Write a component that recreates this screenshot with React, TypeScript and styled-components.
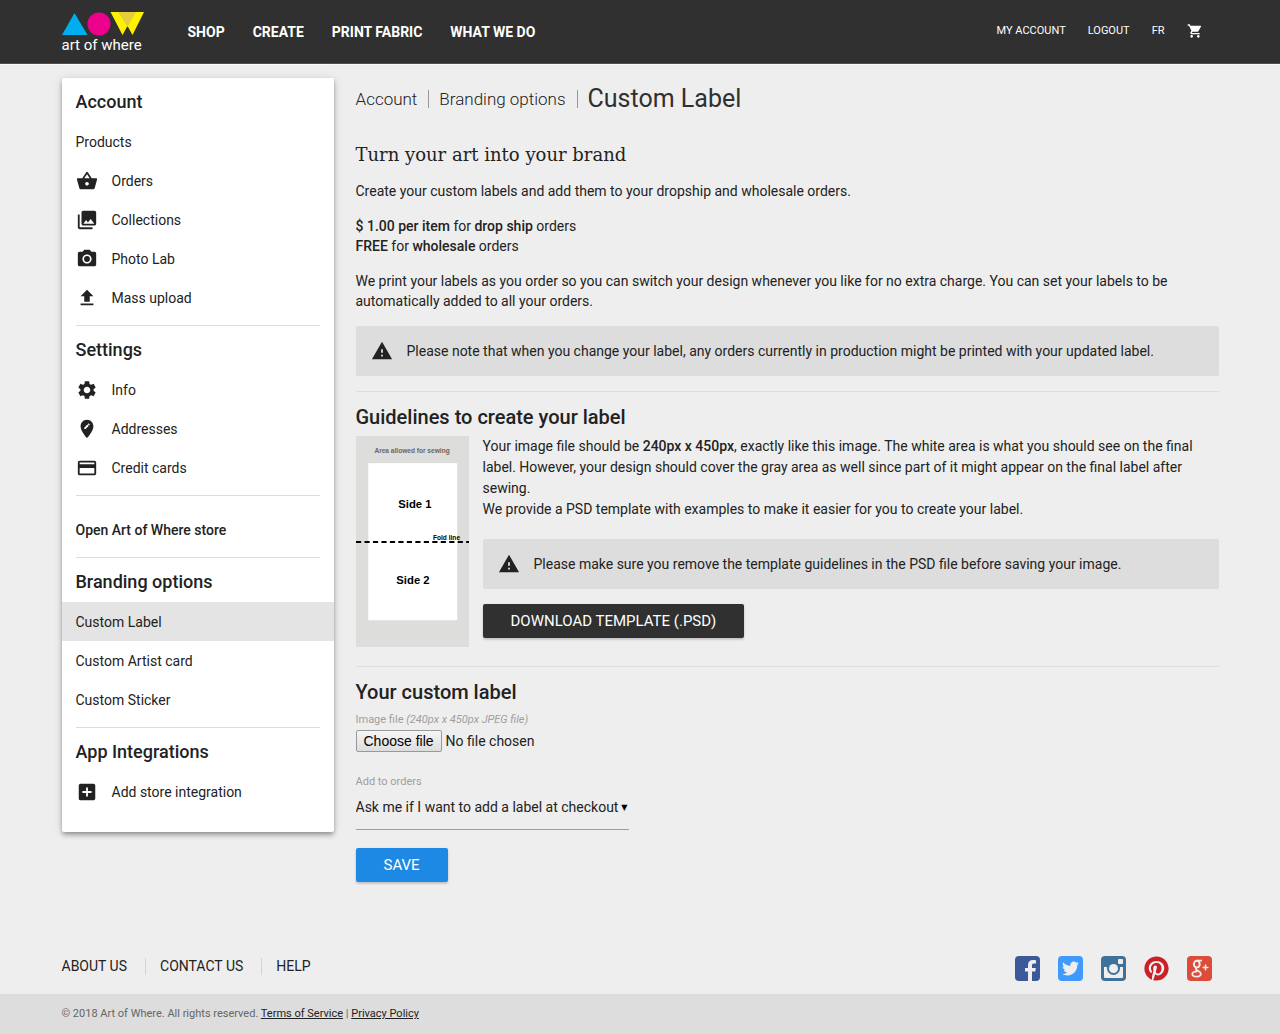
import React, { useState } from "react";
import styled, { createGlobalStyle } from "styled-components";
import {
  MdAddBox,
  MdCreditCard,
  MdEditLocation,
  MdPhotoCamera,
  MdPhotoLibrary,
  MdSettings,
  MdShoppingBasket,
  MdShoppingCart,
  MdWarning,
} from "react-icons/md";
import { FaTwitter, FaPinterest } from "react-icons/fa";

const GlobalStyle = createGlobalStyle`
  *, *::before, *::after { box-sizing: border-box; }
  body {
    margin: 0;
    background: #eeeeee;
    color: #222222;
    font: 400 14px/20px Roboto, "Liberation Sans", sans-serif;
  }
  h1, h2, h3, p, ul { margin: 0; padding: 0; font-weight: 400; }
  ul { list-style: none; }
  a { color: inherit; text-decoration: none; }
  strong { font-weight: 500; }
`;

const Container = styled.div`
  width: calc(100% - 40px);
  max-width: 1157px;
  margin: 0 auto;
`;

/* Header */
const Header = styled.header`
  background: #303030;
  border-bottom: 1px solid #505050;
  box-shadow: 0 1px 0 #fafafa;
  color: #ffffff;
`;

const HeaderInner = styled(Container)`
  display: flex;
  align-items: center;
  min-height: 63px;
`;

const Logo = styled.a`
  display: flex;
  flex-direction: column;
  width: 82px;
  padding-top: 2px;
  margin-right: 44px;
  font-size: 15px;
  line-height: 18px;
  white-space: nowrap;
  svg { display: block; }
`;

const MainNav = styled.nav`
  display: flex;
  gap: 28px;
  flex: 1;
  font-weight: 700;
`;

const UserNav = styled.nav`
  display: flex;
  align-items: center;
  gap: 22px;
  padding: 0 16px 2px 0;
  font-size: 11px;
  a { display: flex; }
`;

/* Page columns */
const Columns = styled(Container)`
  display: flex;
  align-items: flex-start;
  gap: 22px;
  padding-top: 14px;
`;

const Sidebar = styled.aside`
  flex: 0 0 272px;
  padding-bottom: 21px;
  background: #ffffff;
  border-radius: 2px;
  box-shadow: 0 4px 5px 0 rgba(0, 0, 0, 0.14), 0 1px 10px 0 rgba(0, 0, 0, 0.12),
    0 2px 4px -1px rgba(0, 0, 0, 0.3);
`;

const MenuGroup = styled.section<{ $spaced?: boolean }>`
  padding-top: ${(p) => (p.$spaced ? 14 : 0)}px;
  &:not(:last-child)::after {
    content: "";
    display: block;
    height: 1px;
    margin: 8px 14px 0;
    background: #dddddd;
  }
`;

const MenuTitle = styled.h2`
  padding: 4px 14px 0;
  font-size: 18px;
  font-weight: 500;
  line-height: 40px;
`;

const MenuLink = styled.a<{ $active?: boolean; $strong?: boolean }>`
  display: flex;
  align-items: center;
  gap: 14px;
  height: 39px;
  padding: 0 14px;
  font-weight: ${(p) => (p.$strong ? 500 : 400)};
  background: ${(p) => (p.$active ? "#e4e4e4" : "transparent")};
  svg { width: 22px; height: 22px; }
`;

const Main = styled.main`
  flex: 1;
  min-width: 0;
`;

const Breadcrumbs = styled.div`
  display: flex;
  align-items: center;
  height: 42px;
  font-size: 17px;
  font-weight: 300;
  a { padding-right: 11px; margin-right: 10px; border-right: 1px solid #999999; line-height: 18px; }
`;

const PageTitle = styled.h1`
  font-size: 25px;
  color: #303030;
`;

const Tagline = styled.h2`
  margin: 22px 0 13px;
  font-family: "DejaVu Serif", serif;
  font-size: 18px;
  line-height: 26px;
`;

const Paragraph = styled.p`
  margin-bottom: 15px;
`;

const Notice = styled.div`
  display: flex;
  align-items: center;
  gap: 14px;
  padding: 14px 15px;
  margin-bottom: 15px;
  border-radius: 2px;
  background: #dddddd;
  svg { flex: none; width: 22px; height: 22px; }
`;

const Divider = styled.hr`
  height: 1px;
  margin: 0;
  border: 0;
  background: #dddddd;
`;

const SectionTitle = styled.h2`
  padding: 12px 0 6px;
  font-size: 20px;
  font-weight: 500;
  line-height: 26px;
`;

const Guidelines = styled.div`
  display: flex;
  align-items: flex-start;
  gap: 14px;
  margin-bottom: 19px;
`;

const GuidelineBody = styled.div`
  flex: 1;
  min-width: 0;
`;

const GuidelineText = styled.p`
  margin-bottom: 19px;
  line-height: 21px;
`;

const Template = styled.svg`
  display: block;
  flex: none;
`;

const Button = styled.button<{ $tone: string }>`
  height: 34px;
  padding: 0 28px;
  border: 0;
  border-radius: 2px;
  background: ${(p) => p.$tone};
  color: #ffffff;
  font: inherit;
  font-size: 15px;
  text-transform: uppercase;
  box-shadow: 0 2px 2px 0 rgba(0, 0, 0, 0.1), 0 1px 3px 0 rgba(0, 0, 0, 0.12);
  cursor: pointer;
`;

const Form = styled.form`
  display: flex;
  flex-direction: column;
  align-items: flex-start;
`;

const FieldLabel = styled.label`
  color: #9e9e9e;
  font-size: 11px;
  line-height: 18px;
`;

const FilePicker = styled.div`
  position: relative;
  display: flex;
  align-items: center;
  gap: 4px;
  height: 24px;
  margin-bottom: 20px;
  input { position: absolute; inset: 0; width: 100%; opacity: 0; cursor: pointer; }
`;

const FileButton = styled.span`
  padding: 0 7px;
  border: 1px solid #999999;
  border-radius: 2px;
  background: linear-gradient(#f6f6f6, #dddddd);
  color: #000000;
  font: 14px/20px "Liberation Sans", Arial, sans-serif;
`;

const SelectBox = styled.div`
  position: relative;
  margin-bottom: 18px;
  border-bottom: 1px solid #9e9e9e;
  &::after {
    content: "▼";
    position: absolute;
    right: 1px;
    top: 7px;
    font: 8px/20px "DejaVu Sans", sans-serif;
    color: #000000;
    pointer-events: none;
  }
`;

const Select = styled.select`
  display: block;
  width: 273px;
  height: 38px;
  padding: 0 0 6px;
  border: 0;
  appearance: none;
  background: transparent;
  color: inherit;
  font: inherit;
`;

/* Footer */
const Footer = styled.footer`
  margin-top: 73px;
`;

const FooterTop = styled(Container)`
  display: flex;
  justify-content: space-between;
  align-items: flex-start;
  min-height: 39px;
`;

const FooterLinks = styled.nav`
  display: flex;
  padding-top: 3px;
  line-height: 17px;
  a + a { margin-left: 18px; padding-left: 14px; border-left: 1px solid #d4d4d4; }
`;

const SocialLinks = styled.nav`
  display: flex;
  gap: 18px;
  padding: 1px 7px 0 0;
`;

const SocialTile = styled.a<{ $color?: string }>`
  display: grid;
  place-items: center;
  width: 25px;
  height: 25px;
  border-radius: 4px;
  overflow: hidden;
  background: ${(p) => p.$color ?? "transparent"};
  color: #eeeeee;
`;

const Legal = styled.div`
  background: #dddddd;
  color: #666666;
  font-size: 11px;
  line-height: 40px;
  a { color: #222222; text-decoration: underline; }
`;

const UploadIcon = () => (
  <svg viewBox="0 0 24 24" fill="currentColor" aria-hidden="true">
    <path d="M9 16h6v-6h4l-7-7-7 7h4zM5 18h14v2H5z" />
  </svg>
);

const FacebookIcon = () => (
  <svg width="25" height="25" viewBox="0 0 25 25" fill="currentColor" aria-hidden="true">
    <path d="M13 25v-9.400h-3v-3.700h3V9c0-3.300 2-5 5-5 1.400 0 2.600.1 3 .2v3.400h-2.100c-1.600 0-1.900.8-1.900 1.900v2.400h3.800l-.5 3.700H17V25z" />
  </svg>
);

const InstagramIcon = () => (
  <svg width="25" height="25" viewBox="0 0 25 25" aria-hidden="true">
    <path d="M3 11h3a6.500 6.500 0 1 0 13 0h3v10a1 1 0 0 1-1 1H4a1 1 0 0 1-1-1z" fill="#eeeeee" />
    <circle cx="12.500" cy="12.500" r="6.500" fill="#3f729b" />
    <circle cx="12.500" cy="12.500" r="4.500" fill="#eeeeee" />
    <rect x="17" y="3" width="5" height="5" rx="1" fill="#eeeeee" />
  </svg>
);

const GooglePlusIcon = () => (
  <svg width="25" height="25" viewBox="0 0 25 25" aria-hidden="true" fill="none" stroke="#eeeeee">
    <ellipse cx="9.800" cy="8.200" rx="2.900" ry="3.400" strokeWidth="2" />
    <path
      d="M15 4.600h-5M9.500 11.800c-1.500 1.400-.4 2 1 2.700 1.600.8 3.300 1.600 3.300 3.300 0 1.900-1.800 2.900-4.300 2.900-2.600 0-4.200-.9-4.200-2.500 0-1.900 2.200-2.800 5.200-2.800"
      strokeWidth="1.800"
    />
    <path d="M15.500 11.500h6M18.500 8.500v6" strokeWidth="1.500" />
  </svg>
);

const LabelTemplate = () => (
  <Template
    width="113"
    height="211"
    viewBox="0 0 240 450"
    role="img"
    aria-label="Label template"
    fontFamily="Liberation Sans, Arial, sans-serif"
    fontWeight="700"
    preserveAspectRatio="none"
  >
    <rect width="240" height="450" fill="#dddddb" />
    <rect x="26" y="58" width="189" height="335" fill="#ffffff" />
    <text x="119" y="36" fontSize="14" fill="#666666" textAnchor="middle">Area allowed for sewing</text>
    <text x="125" y="154" fontSize="24" textAnchor="middle">Side 1</text>
    <text x="121" y="316" fontSize="24" textAnchor="middle">Side 2</text>
    <text x="221" y="221" fontSize="14" textAnchor="end">Fold line</text>
    <path d="M0 226h240" stroke="#000000" strokeWidth="4" strokeDasharray="11 7" />
  </Template>
);

type Item = { label: string; icon?: React.ReactNode; active?: boolean; strong?: boolean };

const menu: { title?: string; items: Item[] }[] = [
  {
    title: "Account",
    items: [
      { label: "Products" },
      { label: "Orders", icon: <MdShoppingBasket /> },
      { label: "Collections", icon: <MdPhotoLibrary /> },
      { label: "Photo Lab", icon: <MdPhotoCamera /> },
      { label: "Mass upload", icon: <UploadIcon /> },
    ],
  },
  {
    title: "Settings",
    items: [
      { label: "Info", icon: <MdSettings /> },
      { label: "Addresses", icon: <MdEditLocation /> },
      { label: "Credit cards", icon: <MdCreditCard /> },
    ],
  },
  { items: [{ label: "Open Art of Where store", strong: true }] },
  {
    title: "Branding options",
    items: [
      { label: "Custom Label", active: true },
      { label: "Custom Artist card" },
      { label: "Custom Sticker" },
    ],
  },
  { title: "App Integrations", items: [{ label: "Add store integration", icon: <MdAddBox /> }] },
];

export default function App() {
  const [fileName, setFileName] = useState("No file chosen");

  return (
    <>
      <GlobalStyle />
      <Header>
        <HeaderInner>
          <Logo href="#">
            <svg width="82" height="24" viewBox="0 0 82 24" aria-hidden="true">
              <path d="M0 23L12.500 1 25.500 23z" fill="#00aeef" />
              <circle cx="37" cy="12" r="11.500" fill="#ec008c" />
              <path d="M48.500 0H82L70.500 23 65.500 14 60.500 23z" fill="#fff200" />
              <path d="M56 0H74L65.500 15z" fill="#e5cf3a" />
            </svg>
            art of where
          </Logo>
          <MainNav aria-label="Main">
            <a href="#">SHOP</a>
            <a href="#">CREATE</a>
            <a href="#">PRINT FABRIC</a>
            <a href="#">WHAT WE DO</a>
          </MainNav>
          <UserNav aria-label="User">
            <a href="#">MY ACCOUNT</a>
            <a href="#">LOGOUT</a>
            <a href="#">FR</a>
            <a href="#" aria-label="Cart"><MdShoppingCart size={16} /></a>
          </UserNav>
        </HeaderInner>
      </Header>

      <Columns>
        <Sidebar>
          {menu.map((group, i) => (
            <MenuGroup key={i} $spaced={!group.title}>
              {group.title && <MenuTitle>{group.title}</MenuTitle>}
              <ul>
                {group.items.map((item) => (
                  <li key={item.label}>
                    <MenuLink href="#" $active={item.active} $strong={item.strong}>
                      {item.icon}
                      {item.label}
                    </MenuLink>
                  </li>
                ))}
              </ul>
            </MenuGroup>
          ))}
        </Sidebar>

        <Main>
          <Breadcrumbs>
            <a href="#">Account</a>
            <a href="#">Branding options</a>
            <PageTitle>Custom Label</PageTitle>
          </Breadcrumbs>

          <Tagline>Turn your art into your brand</Tagline>
          <Paragraph>
            Create your custom labels and add them to your dropship and wholesale orders.
          </Paragraph>
          <Paragraph>
            <strong>$ 1.00 per item</strong> for <strong>drop ship</strong> orders
            <br />
            <strong>FREE</strong> for <strong>wholesale</strong> orders
          </Paragraph>
          <Paragraph>
            We print your labels as you order so you can switch your design whenever you like for no
            extra charge. You can set your labels to be automatically added to all your orders.
          </Paragraph>
          <Notice>
            <MdWarning />
            Please note that when you change your label, any orders currently in production might be
            printed with your updated label.
          </Notice>

          <Divider />
          <SectionTitle>Guidelines to create your label</SectionTitle>
          <Guidelines>
            <LabelTemplate />
            <GuidelineBody>
              <GuidelineText>
                Your image file should be <strong>240px x 450px</strong>, exactly like this image.
                The white area is what you should see on the final label. However, your design
                should cover the gray area as well since part of it might appear on the final label
                after sewing.
                <br />
                We provide a PSD template with examples to make it easier for you to create your
                label.
              </GuidelineText>
              <Notice>
                <MdWarning />
                Please make sure you remove the template guidelines in the PSD file before saving
                your image.
              </Notice>
              <Button type="button" $tone="#303030">Download template (.psd)</Button>
            </GuidelineBody>
          </Guidelines>

          <Divider />
          <SectionTitle>Your custom label</SectionTitle>
          <Form onSubmit={(e) => e.preventDefault()}>
            <FieldLabel htmlFor="label-file">
              Image file <em>(240px x 450px JPEG file)</em>
            </FieldLabel>
            <FilePicker>
              <FileButton aria-hidden="true">Choose file</FileButton>
              <span>{fileName}</span>
              <input
                id="label-file"
                type="file"
                accept="image/jpeg"
                onChange={(e) => setFileName(e.target.files?.[0]?.name ?? "No file chosen")}
              />
            </FilePicker>
            <FieldLabel htmlFor="add-to-orders">Add to orders</FieldLabel>
            <SelectBox>
              <Select id="add-to-orders">
                <option>Ask me if I want to add a label at checkout</option>
              </Select>
            </SelectBox>
            <Button type="submit" $tone="#1e88e5">Save</Button>
          </Form>
        </Main>
      </Columns>

      <Footer>
        <FooterTop>
          <FooterLinks aria-label="Footer">
            <a href="#">ABOUT US</a>
            <a href="#">CONTACT US</a>
            <a href="#">HELP</a>
          </FooterLinks>
          <SocialLinks aria-label="Social">
            <SocialTile href="#" aria-label="Facebook" $color="#3b5998">
              <FacebookIcon />
            </SocialTile>
            <SocialTile href="#" aria-label="Twitter" $color="#4099ff">
              <FaTwitter size={17} />
            </SocialTile>
            <SocialTile href="#" aria-label="Instagram" $color="#3f729b">
              <InstagramIcon />
            </SocialTile>
            <SocialTile href="#" aria-label="Pinterest">
              <FaPinterest size={25} color="#cb2027" />
            </SocialTile>
            <SocialTile href="#" aria-label="Google Plus" $color="#dd4b39">
              <GooglePlusIcon />
            </SocialTile>
          </SocialLinks>
        </FooterTop>
        <Legal>
          <Container>
            © 2018 Art of Where. All rights reserved. <a href="#">Terms of Service</a> |{" "}
            <a href="#">Privacy Policy</a>
          </Container>
        </Legal>
      </Footer>
    </>
  );
}
